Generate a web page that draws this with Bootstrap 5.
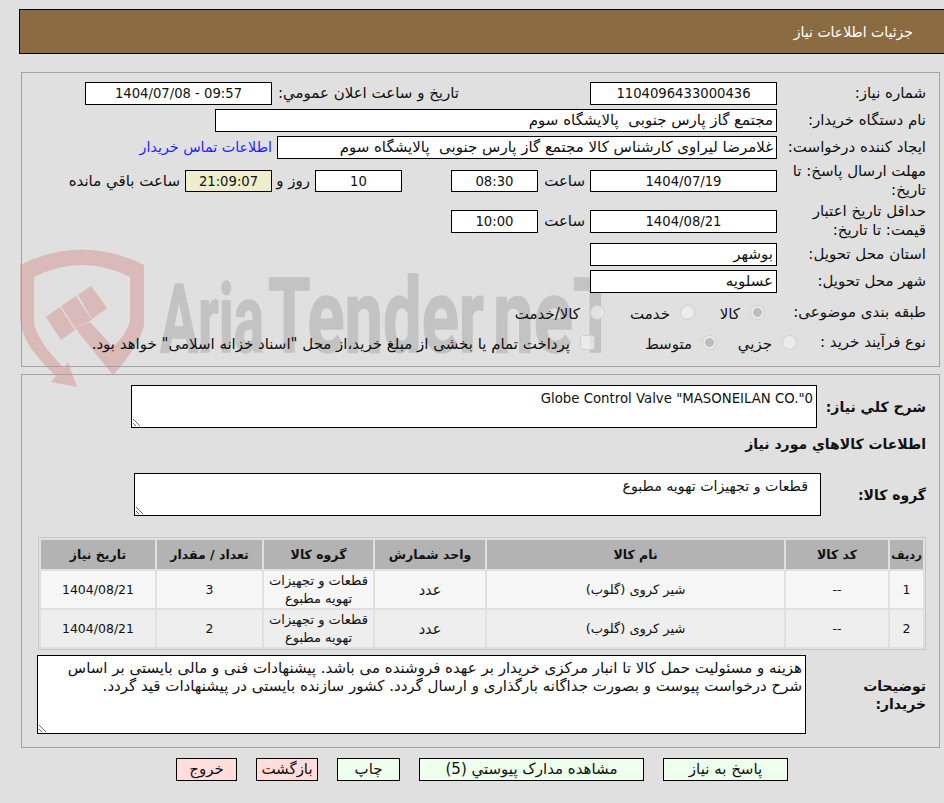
<!DOCTYPE html>
<html lang="fa" dir="rtl">
<head>
<meta charset="utf-8">
<title>جزئیات اطلاعات نیاز</title>
<link rel="stylesheet" href="https://cdn.jsdelivr.net/npm/bootstrap@5.3.0/dist/css/bootstrap.min.css">
<style>
body{background:#e0e0e0;color:#111;font-family:"DejaVu Sans",sans-serif;font-size:15px;line-height:19px;height:803px;overflow:hidden;position:relative}
.wm{position:absolute;left:0;top:0;z-index:-1;direction:ltr}
.wm text{font-family:Roboto,sans-serif;font-weight:700;fill:#c3c3c3;stroke:#c3c3c3;stroke-width:1.5px;direction:ltr}
.head-bar{margin:9px 0 18px 19px;height:45px;background:#8b6b42;border:1px solid #000;border-right:0;color:#fff;padding:0 31px 0 0;line-height:44px;font-size:14px}
.info-panel{margin:0 4px 0 21px;border:1px solid #a3a3a3;padding:0 13px 0 0}
.info-panel.p1{height:295px;margin-bottom:7px;padding-top:7px}
.info-panel.p2{height:374px;padding-top:10px}
.r27{height:27px}.r40{height:40px}.r34{height:34px}.r26{height:26px}
.lab{flex:0 0 149px;white-space:nowrap}
.lab-s{flex:0 0 129px;white-space:nowrap}
.fld{flex:0 0 187px;height:23px;background:#fff;border:1px solid #000;padding:0 3px;line-height:21px;white-space:nowrap;overflow:hidden}
.fld.ctr{text-align:center;font-size:13.2px}
.w87{flex-basis:87px}.w562{flex-basis:562px}.w500{flex-basis:500px}
.h22{height:22px}
.gap131{margin-right:131px;flex:0 0 187px;white-space:nowrap}
.pale{background:#eeeecc}
.l53{flex:0 0 52px;padding-right:5px}
.l43{flex:0 0 43px;padding-right:5px}
.ms49{margin-right:49px}
.tail{padding-right:5px;white-space:nowrap}
.buyer-link{color:#1f1fff;text-decoration:none;padding-right:5px;white-space:nowrap;font-size:14.3px}
.opt{flex:0 0 auto;display:flex;align-items:center}
.opt span{margin-right:10px;margin-top:5px;white-space:nowrap}
.o70{width:70px}.o90{width:90px}.o80{width:80px}.o122{width:122px}
.mk{appearance:none;flex:0 0 15px;width:15px;height:15px;margin:0;border:1px solid #cfcfcf;border-radius:50%;background:rgba(240,240,240,.7)}
.mk:checked{background:radial-gradient(circle,#bdbdbd 0 4px,rgba(240,240,240,.7) 5px)}
.mk.sq{border-radius:3px}
.ms12{margin-right:12px}
.hd{font-weight:700;font-size:14px}
textarea.form-control.box{display:block;min-height:0;border:1px solid #000;border-radius:0;background:#fff;color:#111;font-size:15px;line-height:18px;padding:3px 3px 2px;box-shadow:none;overflow:hidden}
textarea.form-control.t1{width:686px;height:43px;font-size:13.3px;padding-top:4px}
textarea.form-control.t2{width:687px;height:43px;padding-right:12px;font-size:14.2px}
textarea.form-control.t3{width:769px;height:79px}
.lab-a{flex:0 0 109px}.lab-b{flex:0 0 105px}.lab-c{flex:0 0 120px;padding-left:30px}
.sect{height:45px;line-height:32px;margin-bottom:0}
.lab-a,.lab-b,.lab-c{font-size:14px;font-weight:700;line-height:18px}
.wrap-goods{width:888px;margin:21px 0 5px;border:1px solid #c8c8c8;padding:0}
table.goods{width:886px;margin:0;border-collapse:separate;border-spacing:2px;table-layout:fixed;font-size:14.5px;line-height:18px;color:#111}
table.goods>thead>tr>th,table.goods>tbody>tr>td{padding:0;text-align:center;vertical-align:middle;border:0;box-shadow:none;color:#111}
table.goods>thead>tr>th{background:#b3b3b3;height:29px;font-size:12.5px;font-weight:700;white-space:nowrap}
table.goods>thead>tr>th.tiny{font-size:11.5px}
table.goods>tbody>tr>td{height:37px;white-space:nowrap}
table.goods>tbody>tr>td.dg{font-size:12.5px}
table.goods>tbody>tr>td.mid{font-size:13px}
table.goods>tbody>tr:nth-child(1)>td{background:#f6f6f6}
table.goods>tbody>tr:nth-child(2)>td{background:#eee}
.foot{margin:10px 0 0 20px;gap:19px}
.btn.act{height:23px;border:1px solid #000;border-radius:0;padding:0;font-size:15px;line-height:21px;color:#111;font-family:inherit;white-space:nowrap}
.btn.go{background:#eeffee}.btn.no{background:#ffdddd}
.w61{width:61px}.w62{width:62px}.w63{width:63px}.w225{width:225px}.w125{width:125px}
</style>
</head>
<body>
<svg class="wm" width="944" height="803" viewBox="0 0 944 803" aria-hidden="true">
  <g fill="#dab9b9">
    <path d="M20 265Q82 234 144 265V325Q140 345 113 375L75 328L90 322L113 347Q130 330 130 318V277Q82 253 34 277V322Q36 340 64 368L68 362L77 387L51 382L56 376Q22 345 20 320Z"/>
    <path d="M46 317L60 307L75 330L61 340Z"/>
    <path d="M61 306L76 296L92 320L75 328Z"/>
    <path d="M78 295L91 286L107 308L92 319Z"/>
  </g>
  <text x="160" y="352" font-size="96" textLength="104" lengthAdjust="spacingAndGlyphs">Aria</text>
  <text x="268" y="352" font-size="104" textLength="216" lengthAdjust="spacingAndGlyphs">Tender</text>
  <text x="493" y="352" font-size="104" textLength="125" lengthAdjust="spacingAndGlyphs">neT</text>
</svg>

<div class="head-bar">جزئیات اطلاعات نیاز</div>

<div class="info-panel p1">
  <div class="d-flex align-items-center r27">
    <div class="lab">شماره نیاز:</div>
    <div class="fld ctr">1104096433000436</div>
    <div class="gap131">تاریخ و ساعت اعلان عمومي:</div>
    <div class="fld ctr" dir="ltr">1404/07/08 - 09:57</div>
  </div>
  <div class="d-flex align-items-center r27">
    <div class="lab">نام دستگاه خریدار:</div>
    <div class="fld w562">مجتمع گاز پارس جنوبی&nbsp; پالایشگاه سوم</div>
  </div>
  <div class="d-flex align-items-center r27">
    <div class="lab">ایجاد کننده درخواست:</div>
    <div class="fld w500">غلامرضا لیراوی کارشناس کالا مجتمع گاز پارس جنوبی&nbsp; پالایشگاه سوم</div>
    <a class="buyer-link" href="#">اطلاعات تماس خریدار</a>
  </div>
  <div class="d-flex align-items-center r40">
    <div class="lab">مهلت ارسال پاسخ: تا<br>تاریخ:</div>
    <div class="fld ctr h22">1404/07/19</div>
    <div class="l53">ساعت</div>
    <div class="fld ctr w87 h22">08:30</div>
    <div class="fld ctr w87 h22 ms49">10</div>
    <div class="l43">روز و</div>
    <div class="fld ctr w87 h22 pale">21:09:07</div>
    <div class="tail">ساعت باقي مانده</div>
  </div>
  <div class="d-flex align-items-center r40">
    <div class="lab">حداقل تاریخ اعتبار<br>قیمت: تا تاریخ:</div>
    <div class="fld ctr">1404/08/21</div>
    <div class="l53">ساعت</div>
    <div class="fld ctr w87">10:00</div>
  </div>
  <div class="d-flex align-items-center r27">
    <div class="lab">استان محل تحویل:</div>
    <div class="fld">بوشهر</div>
  </div>
  <div class="d-flex align-items-center r27">
    <div class="lab">شهر محل تحویل:</div>
    <div class="fld">عسلویه</div>
  </div>
  <div class="d-flex align-items-center r34">
    <div class="lab">طبقه بندی موضوعی:</div>
    <label class="opt o70 ms12"><input class="mk" type="radio" name="a" checked disabled><span>کالا</span></label>
    <label class="opt o90"><input class="mk" type="radio" name="a" disabled><span>خدمت</span></label>
    <label class="opt"><input class="mk" type="radio" name="a" disabled><span>کالا/خدمت</span></label>
  </div>
  <div class="d-flex align-items-center r26">
    <div class="lab-s">نوع فرآیند خرید :</div>
    <label class="opt o80"><input class="mk" type="radio" name="b" disabled><span>جزیي</span></label>
    <label class="opt o122"><input class="mk" type="radio" name="b" checked disabled><span>متوسط</span></label>
    <label class="opt"><input class="mk sq" type="checkbox" disabled><span>پرداخت تمام یا بخشی از مبلغ خرید،از محل "اسناد خزانه اسلامی" خواهد بود.</span></label>
  </div>
</div>

<div class="info-panel p2">
  <div class="d-flex align-items-center">
    <div class="lab-a">شرح کلي نياز:</div>
    <textarea class="form-control box t1" rows="2" readonly>&#x202D;Globe Control Valve "MASONEILAN CO."0&#x202C;</textarea>
  </div>
  <div class="hd sect">اطلاعات کالاهاي مورد نياز</div>
  <div class="d-flex align-items-center">
    <div class="lab-b">گروه کالا:</div>
    <textarea class="form-control box t2" rows="2" readonly>قطعات و تجهیزات تهویه مطبوع</textarea>
  </div>
  <div class="wrap-goods">
    <table class="table table-borderless goods">
      <colgroup><col style="width:33px"><col style="width:102px"><col style="width:297px"><col style="width:110px"><col style="width:109px"><col style="width:105px"><col></colgroup>
      <thead>
        <tr><th class="tiny">ردیف</th><th>کد کالا</th><th>نام کالا</th><th>واحد شمارش</th><th>گروه کالا</th><th>تعداد / مقدار</th><th>تاریخ نیاز</th></tr>
      </thead>
      <tbody>
        <tr><td class="dg">1</td><td class="dg">--</td><td class="mid">شیر کروی (گلوب)</td><td>عدد</td><td class="mid">قطعات و تجهیزات<br>تهویه مطبوع</td><td class="dg">3</td><td class="dg">1404/08/21</td></tr>
        <tr><td class="dg">2</td><td class="dg">--</td><td class="mid">شیر کروی (گلوب)</td><td>عدد</td><td class="mid">قطعات و تجهیزات<br>تهویه مطبوع</td><td class="dg">2</td><td class="dg">1404/08/21</td></tr>
      </tbody>
    </table>
  </div>
  <div class="d-flex align-items-center">
    <div class="lab-c">توضیحات خریدار:</div>
    <textarea class="form-control box t3" rows="4" readonly>هزینه و مسئولیت حمل کالا تا انبار مرکزی خریدار بر عهده فروشنده می باشد. پیشنهادات فنی و مالی بایستی بر اساس
شرح درخواست پیوست و بصورت جداگانه بارگذاری و ارسال گردد. کشور سازنده بایستی در پیشنهادات قید گردد.</textarea>
  </div>
</div>

<div class="d-flex justify-content-center foot">
  <button type="button" class="btn act go w125">پاسخ به نیاز</button>
  <button type="button" class="btn act go w225">مشاهده مدارک پیوستي (5)</button>
  <button type="button" class="btn act go w63">چاپ</button>
  <button type="button" class="btn act no w62">بازگشت</button>
  <button type="button" class="btn act no w61">خروج</button>
</div>
<script src="https://cdn.jsdelivr.net/npm/bootstrap@5.3.0/dist/js/bootstrap.bundle.min.js"></script>
</body>
</html>
